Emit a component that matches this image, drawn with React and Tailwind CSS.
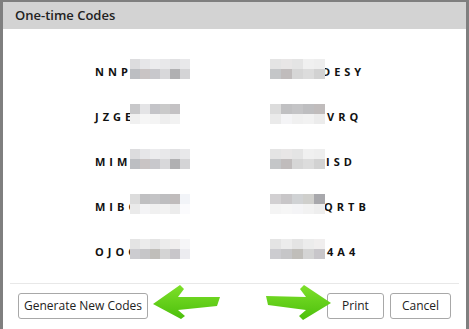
import React from 'react';

// blurred-out parts of each code, two rows of cells
const shadesA = [
  ['#dcdcde', '#e6e6e8', '#ececee', '#e8e8ea', '#e2e2e4', '#e8e8ea'],
  ['#bcbec2', '#c9c4c4', '#c8c8cc', '#d8d8da', '#b0b0b2', '#d4d4d6'],
];
const shadesB = [
  ['#c8c8ca', '#e4e4e6', '#c4c4c8', '#cacaca', '#c4c2c4', '#ffffff'],
  ['#f0f0f0', '#f6f6f6', '#f4f4f4', '#eeeeee', '#f2f2f2', '#ffffff'],
];
const shadesC = [
  ['#e4e4e4', '#e8e6e6', '#e4e4e4', '#f0f0f0', '#eeeeee', '#f0f0f0'],
  ['#c4c6c8', '#c0bcbc', '#d6d6d6', '#dcdcdc', '#d2d2d2', '#d2d2d2'],
];
const shadesD = [
  ['#dcdcdc', '#c0c0c2', '#c4c4c6', '#bebec0', '#c0bcbc', '#f2f4f8'],
  ['#eaeaea', '#f4f4f6', '#f0f0f0', '#f2f2f2', '#ececec', '#fbfbfd'],
];
const shadesE = [
  ['#e4e4e4', '#ececec', '#e4e4e4', '#ececec', '#f0eeee', '#f6f6f8'],
  ['#ccccd0', '#c6c6c8', '#c0beba', '#d4d4d4', '#c8c6ca', '#ececf0'],
];
const shadesF = [
  ['#d2d0d2', '#c8c6c8', '#d0d2d4', '#cfcfcc', '#a8a8ac'],
  ['#f4f4f4', '#f6f6f6', '#f4f4f6', '#f2f2f2', '#eeeeee'],
];

const rows = [
  { left: 'NNP', lShade: shadesA, right: 'DESY', rOff: 'left-[52px]', rShade: shadesC },
  { left: 'JZGE', lShade: shadesB, right: 'VRQ', rOff: 'left-[57px]', rShade: shadesD },
  { left: 'MIM', lShade: shadesA, right: 'ISD', rOff: 'left-[56px]', rShade: shadesC },
  { left: 'MIBC', lShade: shadesD, right: 'QRTB', rOff: 'left-[54px]', rShade: shadesF },
  { left: 'OJOC', lShade: shadesE, right: '4A4', rOff: 'left-[57px]', rShade: shadesE },
];

function Blur({ shades, cols, cell }) {
  return (
    <div className="flex flex-col">
      {shades.map((r, i) => (
        <div key={i} className="flex">
          {r.slice(0, cols).map((c, j) => (
            <div key={j} className={cell} style={{ backgroundColor: c }} />
          ))}
        </div>
      ))}
    </div>
  );
}

function Code({ children }) {
  return (
    <span className="text-[11px] font-bold tracking-[4px] text-[#111] leading-none whitespace-nowrap">
      {children}
    </span>
  );
}

function Arrows() {
  return (
    <svg className="absolute left-0 top-0 pointer-events-none" width="469" height="329" viewBox="0 0 469 329">
      <defs>
        <linearGradient id="g" x1="0" y1="0" x2="0" y2="1">
          <stop offset="0" stopColor="#7ee02a" />
          <stop offset="1" stopColor="#4cbf0c" />
        </linearGradient>
      </defs>
      <polygon
        points="153,304 180,285 184,289 178,297 220,297 217,306 178,310 185,316 181,319"
        fill="url(#g)"
      />
      <polygon
        points="331,303 304,285 300,289 306,297 266,296 268,305 306,310 299,316 303,320"
        fill="url(#g)"
      />
    </svg>
  );
}

export default function App() {
  return (
    <div
      className="relative w-[469px] h-[329px] bg-[#7f7f7f] pt-[2px] pl-[3px] pr-[3px] overflow-hidden"
      style={{ fontFamily: '"Open Sans", "Liberation Sans", sans-serif' }}
    >
      <div className="flex flex-col h-full bg-white">
        {/* Header */}
        <div className="h-[27px] bg-[#d3d3d3] flex items-center pl-[12px]">
          <span className="text-[13px] font-semibold text-[#222]">One-time Codes</span>
        </div>

        {/* Codes */}
        <div className="flex flex-col pt-[29px]">
          {rows.map((r, i) => (
            <div key={i} className="flex h-[45px]">
              <div className="w-[267px] relative">
                <div className="absolute left-[92px] top-[0px]">
                  <Code>{r.left}</Code>
                </div>
                <div className="absolute left-[127px] top-[1px]">
                  <Blur shades={r.lShade} cols={6} cell="w-[10px] h-[10px]" />
                </div>
              </div>
              <div className="relative flex-1">
                <div className={`absolute top-[0px] ${r.rOff}`}>
                  <Code>{r.right}</Code>
                </div>
                <div className="absolute left-0 top-[1px]">
                  <Blur shades={r.rShade} cols={5} cell="w-[11px] h-[10px]" />
                </div>
              </div>
            </div>
          ))}
        </div>

        {/* Footer */}
        <div className="mt-auto mx-[7px] border-t border-[#e8e8e8] h-[46px] flex items-center justify-between px-[8px] pb-[1px]">
          <button className="h-[26px] px-[5px] border border-[#a8a8a8] rounded-[3px] bg-white text-[12px] text-[#222]">
            Generate New Codes
          </button>
          <div className="flex gap-[6px]">
            <button className="h-[26px] w-[57px] border border-[#a8a8a8] rounded-[3px] bg-white text-[12px] text-[#222]">
              Print
            </button>
            <button className="h-[26px] w-[61px] border border-[#a8a8a8] rounded-[3px] bg-white text-[12px] text-[#222]">
              Cancel
            </button>
          </div>
        </div>
      </div>
      <Arrows />
    </div>
  );
}
